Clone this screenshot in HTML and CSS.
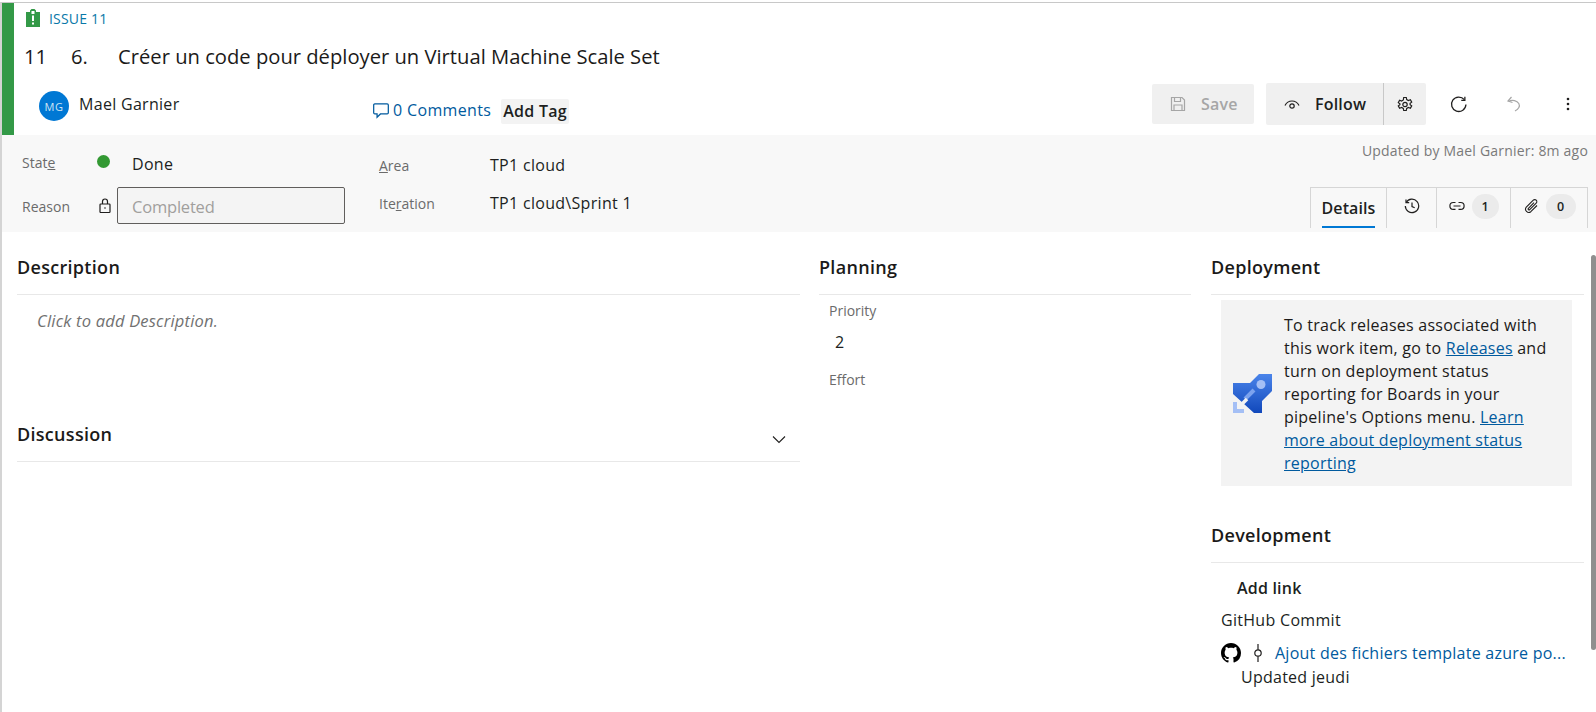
FILE: index.html
```html
<!DOCTYPE html>
<html lang="en">
<head>
<meta charset="utf-8">
<title>Issue 11</title>
<link rel="stylesheet" href="styles.css">
</head>
<body>
<div class="page">
  <header class="head">
    <div class="type-row">
      <svg class="type-icon" viewBox="0 0 14 18" width="14" height="18"><path fill="#339947" d="M0 3h4V1.500L5.500 0h3L10 1.500V3h4v15H0z"/><path fill="#fff" d="M5.500 2h3v3h-3zM6 6.500h2V12H6zM6 13.500h2v2H6z"/></svg>
      <span class="type-label">ISSUE 11</span>
    </div>
    <div class="title-row">
      <span class="title-id">11</span>
      <span class="title-num">6.</span>
      <span class="title-text">Créer un code pour déployer un Virtual Machine Scale Set</span>
    </div>
    <div class="meta-row">
      <div class="person">
        <span class="avatar">MG</span>
        <span class="person-name">Mael Garnier</span>
      </div>
      <div class="comments">
        <svg viewBox="0 0 16 16" width="18" height="18" fill="none" stroke="#005a9e" stroke-width="1.100"><path d="M2.500 2.500h11a1 1 0 0 1 1 1v7a1 1 0 0 1-1 1H7.500L4.500 14.500v-3h-2a1 1 0 0 1-1-1v-7a1 1 0 0 1 1-1z"/></svg>
        <span>0 Comments</span>
      </div>
      <span class="tag">Add Tag</span>
      <div class="actions">
        <button class="btn btn-save">
          <svg viewBox="0 0 16 16" width="16" height="16" fill="none" stroke="#a6a6a6" stroke-width="1.200"><path d="M1.500 1.500h10.500l2.500 2.500v10.500h-13z"/><path d="M4.500 1.500v4h6v-4M4 14.500v-5.500h8v5.500"/></svg>
          <span>Save</span>
        </button>
        <div class="follow">
          <button class="btn btn-follow">
            <svg viewBox="0 0 16 16" width="16" height="16" fill="none" stroke="#201f1e" stroke-width="1.200"><path d="M1 9.500C3 5.500 6 5 8 5s5 .5 7 4.500"/><circle cx="8" cy="10" r="2.200"/></svg>
            <span>Follow</span>
          </button>
          <button class="btn btn-gear">
            <svg viewBox="0 0 16 16" width="16" height="16" fill="none" stroke="#201f1e" stroke-width="1.200"><path d="M6.700 1.500h2.600l.4 2 1.700 1 2-.7 1.300 2.300-1.600 1.300v1.200l1.600 1.300-1.300 2.300-2-.7-1.700 1-.4 2H6.700l-.4-2-1.700-1-2 .7-1.300-2.300 1.600-1.300V7.900L1.300 6.600l1.300-2.300 2 .7 1.700-1z"/><circle cx="8" cy="8.500" r="2.200"/></svg>
          </button>
        </div>
        <button class="icon-btn icon-refresh">
          <svg viewBox="0 0 16 16" width="17" height="17" fill="none" stroke="#201f1e" stroke-width="1.200"><path d="M13.500 3.500A6.800 6.800 0 1 0 15 8"/><path d="M14 .8v3.400h-3.400"/></svg>
        </button>
        <button class="icon-btn icon-undo">
          <svg viewBox="0 0 16 16" width="16" height="16" fill="none" stroke="#a6a6a6" stroke-width="1.200"><path d="M5.500 1L2 5l4.500 1.500"/><path d="M2.500 5.200c4-1.600 8.500-.6 10.300 2.300 1.500 2.800 0 5.600-3.800 7.500"/></svg>
        </button>
        <button class="icon-btn icon-more">
          <svg viewBox="0 0 4 16" width="4" height="16" fill="#201f1e"><circle cx="2" cy="3" r="1.300"/><circle cx="2" cy="8" r="1.300"/><circle cx="2" cy="13" r="1.300"/></svg>
        </button>
      </div>
    </div>
  </header>

  <section class="fields">
    <div class="col-state">
      <div class="f-row">
        <span class="f-label">Stat<u>e</u></span>
        <span class="dot"></span>
        <span class="f-value f-value-done">Done</span>
      </div>
      <div class="f-row f-row-reason">
        <span class="f-label">Reason</span>
        <svg class="lock" viewBox="0 0 12 16" width="12" height="16" fill="none" stroke="#201f1e" stroke-width="1.200"><rect x="1" y="6" width="10" height="8.500" rx=".8"/><path d="M3.500 6V3.500a2.500 2.500 0 0 1 5 0V6"/><circle cx="6" cy="10" r=".8" fill="#201f1e" stroke="none"/></svg>
        <span class="reason-box">Completed</span>
      </div>
    </div>
    <div class="col-area">
      <div class="a-row"><span class="f-label a-label"><u>A</u>rea</span><span class="f-value">TP1 cloud</span></div>
      <div class="a-row"><span class="f-label a-label">Ite<u>r</u>ation</span><span class="f-value">TP1 cloud\Sprint 1</span></div>
    </div>
    <div class="col-right">
      <div class="updated">Updated by Mael Garnier: 8m ago</div>
      <div class="tabs">
        <div class="tab tab-details"><span class="tab-on">Details</span></div>
        <div class="tab tab-hist">
          <svg viewBox="0 0 16 16" width="16" height="16" fill="none" stroke="#201f1e" stroke-width="1.200"><path d="M2.200 4.500A6.700 6.700 0 1 1 1.300 8"/><path d="M2 1.500v3.200h3.200M8 4.500V8.500l2.700 1.300"/></svg>
        </div>
        <div class="tab">
          <svg viewBox="0 0 16 16" width="16" height="16" fill="none" stroke="#201f1e" stroke-width="1.200"><path d="M6.500 4.500H4.300a3.300 3.300 0 0 0 0 6.800h2.200M9.500 4.500h2.200a3.300 3.300 0 0 1 0 6.800H9.500M4.500 8h7"/></svg>
          <span class="count">1</span>
        </div>
        <div class="tab">
          <svg viewBox="0 0 16 16" width="16" height="16" fill="none" stroke="#201f1e" stroke-width="1.100"><path d="M14 7.500L7.800 13.700a3.200 3.200 0 0 1-4.500-4.500L10.300 2.200a2 2 0 0 1 2.900 2.900L6.700 11.600a.9.900 0 0 1-1.300-1.300L11 4.700"/></svg>
          <span class="count count-wide">0</span>
        </div>
      </div>
    </div>
  </section>

  <main class="content">
    <div class="col-main">
      <h2 class="sec-title">Description</h2>
      <p class="desc">Click to add Description.</p>
      <div class="disc-head">
        <h2 class="disc-title">Discussion</h2>
        <svg viewBox="0 0 16 16" width="16" height="16" fill="none" stroke="#201f1e" stroke-width="1.100"><path d="M2 5.500l6 6 6-6"/></svg>
      </div>
    </div>
    <div class="col-plan">
      <h2 class="sec-title">Planning</h2>
      <div class="plan-label">Priority</div>
      <div class="plan-value">2</div>
      <div class="plan-label plan-effort">Effort</div>
    </div>
    <div class="col-side">
      <h2 class="sec-title">Deployment</h2>
      <div class="deploy">
        <svg class="rocket" viewBox="0 0 39 39" width="39" height="39">
          <defs><linearGradient id="rocket-fill" x1="0" y1="0" x2="0" y2="1"><stop offset="0" stop-color="#4a84ea"/><stop offset="1" stop-color="#1148bb"/></linearGradient></defs>
          <path fill="url(#rocket-fill)" d="M26 0H39V17L29 27V39H21L0 20V9H17z"/>
          <circle cx="28" cy="10.500" r="4.500" fill="#a4bff5"/>
          <path fill="none" stroke="#7ba2ee" stroke-width="4" d="M21 16L12 25"/>
          <path fill="#a4bff5" d="M0 28h4v7h7v4H0z"/>
          <path fill="none" stroke="#f3f3f3" stroke-width="3.500" d="M5 34l9-9"/>
        </svg>
        <p class="deploy-text">To track releases associated with this work item, go to <a href="#">Releases</a> and turn on deployment status reporting for Boards in your pipeline's Options menu. <a href="#">Learn more about deployment status reporting</a></p>
      </div>
      <h2 class="sec-title dev-title">Development</h2>
      <div class="add-link">Add link</div>
      <div class="gh-type">GitHub Commit</div>
      <div class="gh-row">
        <svg viewBox="0 0 16 16" width="20" height="20" fill="#000"><path d="M8 0C3.580 0 0 3.580 0 8c0 3.540 2.290 6.530 5.470 7.590.4.070.55-.17.550-.38 0-.19-.01-.82-.01-1.490-2.010.37-2.530-.49-2.690-.94-.09-.23-.48-.94-.82-1.130-.28-.15-.68-.52-.01-.53.630-.01 1.080.58 1.230.82.720 1.210 1.870.87 2.330.66.070-.52.280-.87.510-1.070-1.780-.2-3.640-.89-3.640-3.950 0-.87.310-1.590.82-2.150-.08-.2-.36-1.020.08-2.120 0 0 .670-.21 2.200.82.640-.18 1.320-.27 2-.27s1.360.09 2 .27c1.530-1.040 2.200-.82 2.200-.82.440 1.100.160 1.920.080 2.120.510.560.820 1.270.820 2.150 0 3.070-1.870 3.750-3.650 3.950.290.250.540.730.540 1.480 0 1.070-.01 1.930-.01 2.200 0 .21.150.460.550.380A8.010 8.010 0 0 0 16 8c0-4.420-3.580-8-8-8z"/></svg>
        <svg class="commit" viewBox="0 0 10 18" width="10" height="18" fill="none" stroke="#201f1e" stroke-width="1.200"><circle cx="5" cy="9" r="3.200"/><path d="M5 0v5.800M5 12.200V18"/></svg>
        <a class="gh-link" href="#">Ajout des fichiers template azure po...</a>
      </div>
      <div class="gh-updated">Updated jeudi</div>
    </div>
    <div class="scroll-thumb"></div>
  </main>
</div>
</body>
</html>
```

FILE: styles.css
```css
* { box-sizing: border-box; }
html, body { margin: 0; padding: 0; background: #fff; }
body {
  font-family: "Open Sans", "Noto Sans", "Liberation Sans", sans-serif;
  color: #201f1e;
  height: 712px;
  overflow: hidden;
  padding-top: 2px;
}
.page {
  border-top: 1px solid #c8c8c8;
  border-left: 2px solid #d4d4d4;
  height: 710px;
  display: flex;
  flex-direction: column;
}
h2, p { margin: 0; }
button { border: 0; background: none; font-family: inherit; padding: 0; }

.head {
  height: 132px;
  border-left: 12px solid #339947;
  padding-left: 11px;
  flex: none;
}
.type-row { height: 31px; display: flex; align-items: center; padding-top: 1px; }
.type-icon { margin-left: 1px; margin-right: 9px; margin-top: -2px; }
.type-label { font-size: 14px; color: #0a78a8; letter-spacing: .2px; margin-top: -1px; }
.title-row { height: 44px; display: flex; align-items: center; font-size: 20.200px; color: #1b1a19; }
.title-id { width: 47px; margin-left: -1px; }
.title-num { width: 47px; }
.meta-row { display: flex; height: 57px; padding-left: 14px; position: relative; }
.person { display: flex; align-items: center; width: 333px; height: 40px; margin-top: 8px; }
.avatar {
  width: 30px; height: 30px; border-radius: 50%;
  background: #0078d4; color: #cfe4f5;
  font-size: 11px; letter-spacing: .5px;
  display: flex; align-items: center; justify-content: center;
  margin-right: 10px;
}
.person-name { font-size: 16px; letter-spacing: .3px; margin-top: -4px; }
.comments { display: flex; align-items: center; gap: 3px; color: #005a9e; font-size: 16px; letter-spacing: .35px; height: 40px; margin-top: 12px; }
.tag { font-size: 16px; font-weight: 600; background: #f3f3f3; height: 25px; line-height: 25px; padding: 0 2px; margin: 21px 0 0 10px; letter-spacing: .25px; border-radius: 2px; color: #201f1e; }
.actions { margin-left: auto; display: flex; align-items: center; height: 42px; margin-top: 5px; padding-right: 26px; }
.btn { display: flex; align-items: center; font-weight: 600; font-size: 16px; background: #f0f0f0; border-radius: 2px; letter-spacing: .2px; }
.btn-save { width: 102px; height: 40px; padding-left: 18px; gap: 15px; color: #a6a6a6; margin-right: 12px; }
.follow { display: flex; }
.btn-follow { width: 118px; height: 42px; padding-left: 18px; gap: 15px; border-right: 1px solid #c8c8c8; color: #201f1e; border-radius: 2px 0 0 2px; }
.btn-gear { width: 42px; height: 42px; justify-content: center; border-radius: 0 2px 2px 0; }
.icon-btn { display: flex; align-items: center; justify-content: center; height: 40px; }
.icon-refresh { width: 17px; margin-left: 24px; }
.icon-undo { width: 16px; margin-left: 39px; }
.icon-more { width: 4px; margin-left: 44px; }

.fields { background: #f8f8f8; height: 97px; display: flex; flex: none; position: relative; }
.f-label { font-size: 14px; color: #6b6b6b; }
.f-value { font-size: 16px; letter-spacing: .3px; color: #201f1e; }
.f-value-done { padding-top: 3px; }
.col-state { width: 377px; padding-left: 20px; flex: none; }
.f-row { display: flex; align-items: center; height: 52px; padding-top: 2px; }
.f-row .f-label { width: 75px; }
.dot { width: 13px; height: 13px; border-radius: 50%; background: #339933; margin-right: 22px; margin-top: -2px; }
.f-row-reason { height: 37px; padding-top: 0; }
.f-row-reason .f-label { width: 74px; padding-top: 2px; }
.lock { margin: 0 6px 0 3px; }
.reason-box { width: 228px; height: 37px; border: 1px solid #605e5c; border-radius: 2px; background: #f4f4f4; color: #a19f9d; font-size: 16.500px; letter-spacing: -.2px; padding-left: 14px; line-height: 37px; }
.col-area { width: 400px; flex: none; padding-top: 11px; }
.a-row { display: flex; align-items: center; height: 38px; }
.a-label { width: 111px; }
.col-right { flex: 1; display: flex; flex-direction: column; align-items: flex-end; padding-right: 8px; }
.updated { font-size: 14px; color: #7a7a7a; letter-spacing: .2px; line-height: 18px; margin-top: 7px; white-space: nowrap; }
.tabs { display: flex; height: 41px; margin-top: 27px; border: 1px solid #d6d6d6; border-bottom: 0; border-right: 1px solid #d6d6d6; }
.tab { display: flex; align-items: center; justify-content: center; border-right: 1px solid #d6d6d6; height: 40px; width: 74px; gap: 7px; padding-bottom: 4px; }
.tab:last-child { width: 76px; border-right: 0; }
.tab-details { width: 76px; padding: 0; display: block; text-align: center; }
.tab-hist { width: 50px; }
.tab-on { display: inline-block; font-weight: 600; font-size: 16px; letter-spacing: .1px; height: 40px; line-height: 40px; border-bottom: 2px solid #0078d4; }
.count { min-width: 27px; height: 25px; border-radius: 13px; background: #ebebeb; display: flex; align-items: center; justify-content: center; font-size: 12.500px; font-weight: 600; }
.count-wide { min-width: 30px; }

.content { flex: 1; position: relative; display: flex; padding: 0 0 0 15px; min-height: 0; }
.col-main { width: 783px; flex: none; margin-right: 19px; }
.col-plan { width: 372px; flex: none; margin-right: 20px; }
.col-side { width: 373px; flex: none; }
.sec-title { font-size: 18px; font-weight: 600; letter-spacing: .3px; height: 63px; padding-top: 22px; line-height: 27px; border-bottom: 1px solid #e8e8e8; color: #1b1a19; }
.desc { font-style: italic; font-size: 16.500px; color: #717171; letter-spacing: .2px; padding: 14px 0 0 20px; height: 103px; }
.disc-head { height: 64px; padding-top: 23px; display: flex; align-items: flex-start; justify-content: space-between; border-bottom: 1px solid #e8e8e8; padding-right: 13px; }
.disc-title { font-size: 18px; font-weight: 600; letter-spacing: .3px; line-height: 27px; margin: 0; color: #1b1a19; }
.disc-head svg { margin-top: 10px; }
.plan-label { font-size: 14px; color: #6b6b6b; padding-left: 10px; margin-top: 7px; line-height: 18px; }
.plan-value { font-size: 16px; padding-left: 16px; margin-top: 12px; line-height: 20px; }
.plan-effort { margin-top: 19px; }
.deploy { margin: 5px 10px 0; width: 351px; height: 186px; background: #f3f3f3; display: flex; align-items: center; padding-left: 12px; }
.rocket { flex: none; margin-right: 12px; }
.deploy-text { font-size: 16px; line-height: 23px; width: 272px; color: #1b1a19; letter-spacing: .25px; padding-top: 2px; }
.deploy-text a { color: #005a9e; text-decoration: underline; }
.dev-title { margin-top: 14px; }
.add-link { font-size: 16px; font-weight: 600; padding-left: 26px; margin-top: 14px; line-height: 22px; letter-spacing: .2px; }
.gh-type { font-size: 16px; padding-left: 10px; margin-top: 10px; line-height: 22px; letter-spacing: .3px; }
.gh-row { display: flex; align-items: center; height: 24px; padding-left: 10px; margin-top: 10px; }
.commit { margin: 0 12px 0 12px; }
.gh-link { font-size: 16px; color: #005a9e; text-decoration: none; letter-spacing: .25px; white-space: nowrap; }
.gh-updated { font-size: 16px; padding-left: 30px; line-height: 22px; letter-spacing: .25px; margin-top: 1px; }
.scroll-thumb { position: absolute; right: 0; top: 23px; width: 5px; height: 395px; background: #8f8f8f; border-radius: 3px; }
```
